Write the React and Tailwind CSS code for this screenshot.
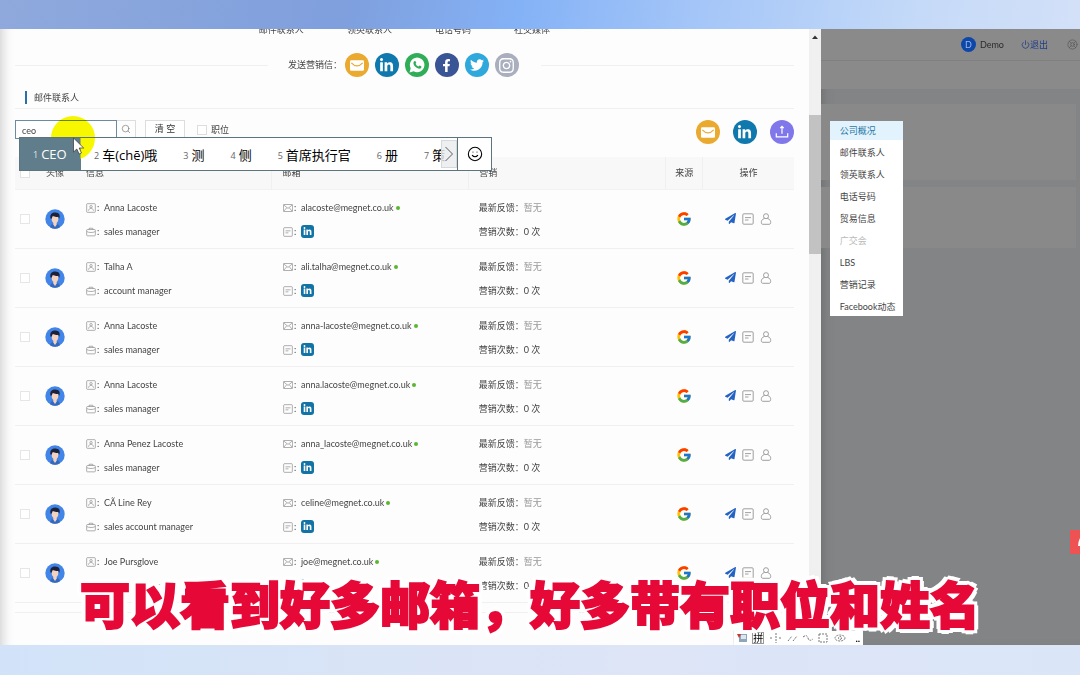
import React, { useState } from 'react';
import { FaFacebookF, FaInstagram, FaLinkedinIn, FaPaperPlane, FaTwitter } from 'react-icons/fa';
import { FcGoogle } from 'react-icons/fc';
import { LifeBuoy, Power, Search, Smile } from 'lucide-react';

const contacts = [
  { name: 'Anna Lacoste', job: 'sales manager', email: 'alacoste@megnet.co.uk' },
  { name: 'Talha A', job: 'account manager', email: 'ali.talha@megnet.co.uk' },
  { name: 'Anna Lacoste', job: 'sales manager', email: 'anna-lacoste@megnet.co.uk' },
  { name: 'Anna Lacoste', job: 'sales manager', email: 'anna.lacoste@megnet.co.uk' },
  { name: 'Anna Penez Lacoste', job: 'sales manager', email: 'anna_lacoste@megnet.co.uk' },
  { name: 'CÃ Line Rey', job: 'sales account manager', email: 'celine@megnet.co.uk' },
  { name: 'Joe Pursglove', job: 'sales manager', email: 'joe@megnet.co.uk' },
];

const menu = ['公司概况', '邮件联系人', '领英联系人', '电话号码', '贸易信息', '广交会', 'LBS', '营销记录', 'Facebook动态'];

const candidates = ['车(chē)哦', '测', '侧', '首席执行官', '册', '策'];

const MailGlyph = () => (
  <svg viewBox="0 0 16 12" className="w-[14px] h-[11px]">
    <rect width="16" height="12" rx="1.5" fill="#fff" />
    <path d="M1.500 3q6.500 7 13 0" fill="none" stroke="#eaa92f" strokeWidth="1.4" />
  </svg>
);

const WhatsappGlyph = () => (
  <svg viewBox="0 0 18 18" className="w-[18px] h-[18px]">
    <path d="M1.500 16.500l1.200-4.200a7.300 7.300 0 1 1 3 3z" fill="#fff" />
    <path d="M6.300 5.300c.8-.8 1.300-.3 1.900 1.300.2.600-.8 1-.5 1.500.6 1.100 1.400 1.800 2.600 2.300.5.200.9-1 1.400-.8 1.500.7 2 .9 1.600 1.900-.5 1.300-2.100 1.600-4.200.6-2-1-3.600-3.100-3.700-4.800 0-.9.300-1.500.9-2z" fill="#2fae57" />
  </svg>
);

const UploadGlyph = () => (
  <svg viewBox="0 0 16 16" className="w-[14px] h-[14px]" fill="none" stroke="#fff" strokeWidth="1.4">
    <path d="M8 10V1.500M6 3.500l2-2 2 2M1.500 9.500v4h13v-4" />
  </svg>
);

const lineIcons = {
  note: <><rect x="0.8" y="0.8" width="10.4" height="10.4" rx="1" /><path d="M3 4.600h6M3 7h3.500" /></>,
  card: <><rect x="0.8" y="0.8" width="10.4" height="10.4" rx="1" /><circle cx="6" cy="4.500" r="1.500" /><path d="M3 9.300c.4-2 1.600-3 3-3s2.600 1 3 3" /></>,
  mail: <><rect x="0.5" y="1.800" width="11" height="8.400" rx="0.6" /><path d="m1 2.500 5 4 5-4M1 9.800l3.400-4M11 9.800l-3.400-4" /></>,
  job: <><rect x="0.8" y="3" width="10.400" height="7.600" rx="1" /><path d="M3.800 3V1.500h4.400V3M1 5.500c2.500 1.500 7.500 1.500 10 0" /></>,
  user: <><circle cx="6" cy="3.200" r="2.500" /><path d="M4.500 5.400C2 6.200 1.300 8 1.300 9.500c0 1.300.6 1.800 1.700 1.800h6c1.100 0 1.700-.5 1.700-1.800 0-1.500-.7-3.300-3.200-4.100" /></>,
};

const LineIcon = ({ name, className }) => (
  <svg viewBox="0 0 12 12" className={`text-[#888] ${className}`} fill="none" stroke="currentColor" strokeWidth="0.8">
    {lineIcons[name]}
  </svg>
);

const Avatar = () => (
  <svg viewBox="0 0 20 20" className="block w-5 h-5 mx-auto">
    <circle cx="10" cy="10" r="9.7" fill="#4285e8" />
    <path d="M5 18.2C6 15 8 14.500 10 14.500s4 .5 5 3.700a9.700 9.700 0 0 1-10 0z" fill="#3569bd" />
    <path d="M8.300 12h3.400v3.500L10 18l-1.700-2.500z" fill="#f3d3bd" />
    <ellipse cx="10" cy="10" rx="3.300" ry="4" fill="#f3d3c0" />
    <path d="M5.600 9.800C4.500 5.500 6.500 3.200 10.500 3.400c3.600.1 5 2.600 3.800 6.300l-1-2c-2 .4-4.200.2-5.600-.6l-1 2.300z" fill="#1d2238" />
  </svg>
);

const Round = ({ className, label, children }) => (
  <button aria-label={label} className={`w-6 h-6 rounded-full flex items-center justify-center text-white ${className}`}>
    {children}
  </button>
);

const CheckBox = ({ label, className }) => (
  <input
    type="checkbox"
    aria-label={label}
    className={`appearance-none block w-[10px] h-[10px] border bg-white ${className}`}
  />
);

function ContactRow({ contact }) {
  return (
    <tr className="h-[59px] border-b border-[#f0f0f0]">
      <td><CheckBox label={contact.email} className="mx-auto border-[#e6e6e6]" /></td>
      <td><Avatar /></td>
      <td className="pl-[11px] pt-[2px]">
        <div className="flex flex-col gap-3">
          <div className="flex items-center h-3 whitespace-nowrap">
            <LineIcon name="card" className="w-[10px] h-[10px]" />
            <span className="w-2 pl-px">:</span>
            <span>{contact.name}</span>
          </div>
          <div className="flex items-center h-3 whitespace-nowrap">
            <LineIcon name="job" className="w-[10px] h-[10px]" />
            <span className="w-2 pl-px">:</span>
            <span>{contact.job}</span>
          </div>
        </div>
      </td>
      <td className="pl-[11px] pt-[2px]">
        <div className="flex flex-col gap-3">
          <div className="flex items-center h-3 whitespace-nowrap">
            <LineIcon name="mail" className="w-[10px] h-[10px]" />
            <span className="w-2 pl-px">:</span>
            <a href={`mailto:${contact.email}`}>{contact.email}</a>
            <span className="w-1 h-1 rounded-full bg-[#5cb531] ml-[2px]"></span>
          </div>
          <div className="flex items-center h-3">
            <LineIcon name="note" className="w-[10px] h-[10px]" />
            <span className="w-2 pl-px">:</span>
            <a href="#linkedin" aria-label="LinkedIn" className="w-[13px] h-[13px] rounded-[3px] bg-[#1273a6] text-white flex items-center justify-center">
              <FaLinkedinIn size={9} />
            </a>
          </div>
        </div>
      </td>
      <td className="pl-[10px] pt-[2px]">
        <div className="flex flex-col gap-3 leading-3 whitespace-nowrap">
          <div>最新反馈：<span className="text-[#999]">暂无</span></div>
          <div>营销次数：0 次</div>
        </div>
      </td>
      <td><FcGoogle size={16} className="mx-auto" /></td>
      <td>
        <div className="flex items-center justify-center gap-[6px]">
          <button aria-label="发送"><FaPaperPlane size={11} className="text-[#2463c4]" /></button>
          <button aria-label="备注"><LineIcon name="note" className="w-3 h-3" /></button>
          <button aria-label="联系人"><LineIcon name="user" className="w-3 h-3" /></button>
        </div>
      </td>
    </tr>
  );
}

function ImePopup() {
  return (
    <div className="absolute left-[19px] top-[108px] flex h-[34px] border border-[#5d737e] bg-white font-['Open_Sans','Noto_Sans_CJK_SC',sans-serif] text-[13px] text-black">
      <div className="flex items-center w-[61px] pl-[13px] pt-[2px] gap-[3px] bg-[#607d8b] text-white">
        <span className="text-[9px] opacity-80">1</span>CEO
      </div>
      <div className="flex items-center overflow-hidden w-[376px] pt-[3px]">
        {candidates.map((word, i) => (
          <div key={word} className="flex shrink-0 items-center gap-[3px] px-[13px]">
            <span className="text-[9px] text-[#666]">{i + 2}</span>{word}
          </div>
        ))}
      </div>
      <button aria-label="更多" className="absolute right-[34px] top-[2px] w-4 h-7 border border-[#d5d9dc] bg-[#e9ebee]/80">
        <svg viewBox="0 0 16 28" className="w-full h-full" fill="none" stroke="#444">
          <path d="m4 6 8 8-8 8" />
        </svg>
      </button>
      <button aria-label="表情" className="w-[34px] border-l border-[#5d737e] flex items-center justify-center">
        <Smile size={16} strokeWidth={1.6} />
      </button>
    </div>
  );
}

function ImeBar() {
  return (
    <div className="absolute left-[733px] bottom-0 w-[130px] h-[14px] bg-white border-l border-[#eee] flex items-center justify-around text-[10px] leading-3 text-[#555]">
      <svg viewBox="0 0 10 10" className="w-[10px] h-[10px]">
        <rect x="2" y="1" width="8" height="8" fill="#8ea5ba" />
        <rect x="4" y="2" width="5" height="4" fill="#dbe6f0" />
        <path d="M0 1h4L2 5z" fill="#c33" />
      </svg>
      <span className="border border-[#999] leading-[10px] text-black">拼</span>
      <svg viewBox="0 0 80 10" className="w-20 h-[10px]" fill="none" stroke="#777" strokeDasharray="2 1">
        <path d="M6 0v10M0 5h3M9 5h3M18 8l4-5M23 8l4-5M33 4q4-3 5 1t5 1M49 1h8v8h-8z" />
        <ellipse cx="70" cy="5" rx="5" ry="3" />
        <circle cx="70" cy="5" r="1.500" />
      </svg>
      <span className="text-black font-bold">..</span>
    </div>
  );
}

function Drawer() {
  const [query, setQuery] = useState('ceo');

  return (
    <section className="relative w-[76%] shrink-0 flex bg-[#fdfdfd]">
      <div className="flex-1 min-w-0 px-[15px] shadow-[inset_14px_0_12px_-12px_#ccc]">
        <div className="flex justify-center items-end gap-[43px] h-2 overflow-hidden leading-[14px]">
          <span>邮件联系人</span>
          <span>领英联系人</span>
          <span>电话号码</span>
          <span>社交媒体</span>
        </div>

        <div className="flex items-center mt-4">
          <hr className="flex-1 border-[#f0f0f0] mr-5" />
          <span className="w-[57px]">发送营销信：</span>
          <div className="flex gap-[6px]">
            <Round label="邮件" className="bg-[#eaa92f]"><MailGlyph /></Round>
            <Round label="LinkedIn" className="bg-[#0f78ad]"><FaLinkedinIn size={15} /></Round>
            <Round label="WhatsApp" className="bg-[#2fae57]"><WhatsappGlyph /></Round>
            <Round label="Facebook" className="bg-[#3a5595]"><FaFacebookF size={13} /></Round>
            <Round label="Twitter" className="bg-[#2fa8dc]"><FaTwitter size={14} /></Round>
            <Round label="Instagram" className="bg-[#a9afbe]"><FaInstagram size={17} /></Round>
          </div>
          <hr className="flex-1 border-[#f0f0f0] ml-[22px]" />
        </div>

        <div className="mt-[14px] pl-[10px] pb-1 border-b border-[#f0f0f0]">
          <h2 className="border-l-2 border-[#2a6fa8] pl-[7px] leading-[13px]">邮件联系人</h2>
        </div>

        <div className="flex items-start h-6 mt-[11px]">
          <input
            aria-label="搜索"
            value={query}
            onChange={(e) => setQuery(e.target.value)}
            className="w-[102px] h-[19px] px-[6px] pt-px border border-[#6b8ba4] bg-white outline-none"
          />
          <button aria-label="查询" className="w-[19px] h-[18px] border border-l-0 border-[#ddd] flex items-center justify-center">
            <Search size={10} strokeWidth={1.6} className="text-[#777]" />
          </button>
          <button className="w-10 h-[18px] ml-[9px] border border-[#ddd] bg-white text-[#333]">清 空</button>
          <label className="flex items-center gap-1 h-5 ml-3">
            <CheckBox className="border-[#ddd]" />职位
          </label>
          <div className="flex gap-[13px] ml-auto">
            <Round label="邮件" className="bg-[#eaa92f]"><MailGlyph /></Round>
            <Round label="LinkedIn" className="bg-[#0f78ad]"><FaLinkedinIn size={15} /></Round>
            <Round label="导出" className="bg-[#8078ea]"><UploadGlyph /></Round>
          </div>
        </div>

        <table className="w-full mt-[13px] table-fixed">
          <colgroup>
            <col className="w-5" />
            <col className="w-10" />
            <col />
            <col />
            <col />
            <col className="w-[37px]" />
            <col className="w-[91px]" />
          </colgroup>
          <thead>
            <tr className="h-8 bg-[#f8f8f8] border-b border-[#f2f2f2]">
              <th><CheckBox label="全选" className="mx-auto border-[#e2e2e2]" /></th>
              <th className="font-normal">头像</th>
              <th className="font-normal text-left pl-[11px] border-r border-[#f0f0f0]">信息</th>
              <th className="font-normal text-left pl-[10px] border-r border-[#f0f0f0]">邮箱</th>
              <th className="font-normal text-left pl-[10px]">营销</th>
              <th className="font-normal border-x border-[#f0f0f0]">来源</th>
              <th className="font-normal">操作</th>
            </tr>
          </thead>
          <tbody>
            {contacts.map((c) => <ContactRow key={c.email} contact={c} />)}
          </tbody>
        </table>
        <hr className="mt-[9px] mb-8 border-[#f0f0f0]" />
      </div>

      {/* Scrollbar */}
      <div className="w-3 bg-[#f0f0f0]">
        <svg viewBox="0 0 12 16" className="w-3 h-4"><path d="M3 10h6L6 6.500z" fill="#333" /></svg>
        <div className="h-[139px] mt-[70px] bg-[#c2c2c2]"></div>
      </div>

      {/* Click highlight sits between the field and the candidate list */}
      <div className="absolute left-[51px] top-[87px] w-[44px] h-[44px] rounded-full bg-[#f7f700] mix-blend-multiply"></div>
      <ImePopup />
      <svg viewBox="0 0 44 44" className="absolute left-[51px] top-[87px] w-[44px] h-[44px]">
        <path d="M29.500 22H44a22 22 0 0 1-14.500 20.700z" fill="#f7f700" />
        <path d="M22.500 22v14l3.300-3 2.300 5 2.400-1-2.300-5h4.500z" fill="#fff" stroke="#333" strokeWidth=".7" />
      </svg>
    </section>
  );
}

function Backdrop() {
  return (
    <div className="relative flex-1 min-w-0 overflow-hidden bg-[#828486] shadow-[inset_8px_0_12px_-8px_#666]">
      <div className="flex items-center justify-end h-8 border-b border-[#808080] bg-[#8a8a8a]">
        <span className="w-[15px] h-[15px] rounded-full bg-[#0d47a8] text-[#9db8e8] flex items-center justify-center">D</span>
        <span className="ml-1 text-[#2b2b2b]">Demo</span>
        <button className="flex items-center ml-[17px] text-[#1d3c86]"><Power size={9} />退出</button>
        <LifeBuoy size={11} strokeWidth={1.4} className="ml-[19px] mr-[2px] text-[#555]" />
      </div>
      <div className="h-7 bg-[#8a8a8a]"></div>
      <div className="mt-[15px] mr-1 h-[76px] bg-[#898989]"></div>
      <div className="mt-[7px] mr-1 h-[61px] bg-[#898989]"></div>

      <nav className="absolute left-[9px] top-[92px] w-[73px] flex flex-col gap-[3px] bg-white">
        {menu.map((item, i) => (
          <a
            key={item}
            href={`#section-${i}`}
            className={`pl-[10px] leading-[19px] whitespace-nowrap ${
              i === 0 ? 'bg-[#e3f3fd] text-[#2678a8]' : i === 5 ? 'text-[#bbb]' : 'text-[#444]'
            }`}
          >
            {item}
          </a>
        ))}
      </nav>

      <button aria-label="客服" className="absolute right-0 top-[501px] w-[10px] h-6 bg-[#ee5253] overflow-hidden">
        <svg viewBox="0 0 10 24" className="w-full h-full"><path d="M10 8q-2 4-2 8h2z" fill="#fff" /></svg>
      </button>
    </div>
  );
}

export default function App() {
  return (
    <div className="relative overflow-hidden min-h-screen flex flex-col bg-[#d9e6f9] font-['Lato','Noto_Sans_CJK_SC',sans-serif] text-[9px] text-[#444]">
      <div className="h-[29px] bg-[linear-gradient(100deg,#8fa9dc_0%,#7f9fdd_32%,#84b2f6_48%,#a5c6f8_65%,#c5daf8_85%,#d3e0f8_100%)]"></div>
      <main className="relative flex">
        <Drawer />
        <Backdrop />
        <ImeBar />
      </main>
      <div className="flex-1 bg-[linear-gradient(90deg,#d2e3f9,#d9e4f6_35%,#dde5f7_60%,#dae6f8)]"></div>

      {/* Subtitle */}
      <p className="absolute inset-x-0 bottom-[37px] text-center text-[50px] leading-[72px] pr-5 font-black whitespace-nowrap text-[#e60937] font-['Noto_Sans_CJK_SC',sans-serif] [-webkit-text-stroke:2px_#e60937] [text-shadow:5px_0_0_#fff,-5px_0_0_#fff,0_5px_0_#fff,0_-5px_0_#fff,4px_4px_0_#fff,-4px_4px_0_#fff,4px_-4px_0_#fff,-4px_-4px_0_#fff]">
        可以看到好多邮箱，好多带有职位和姓名
      </p>
    </div>
  );
}
